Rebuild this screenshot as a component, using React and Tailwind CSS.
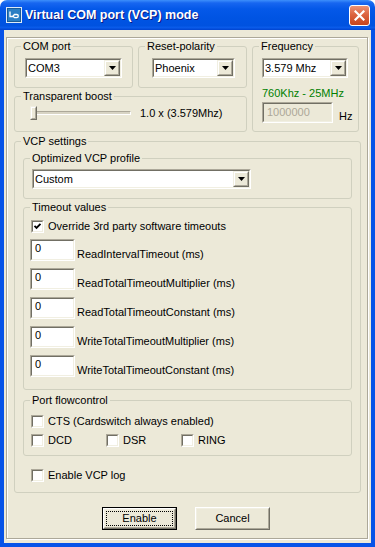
import React from "react";

// classic 3D edges on the XP dialog face colour
const sunkenOuter = "border border-t-[#ACA899] border-l-[#ACA899] border-b-white border-r-white";
const sunkenInner = "border border-t-[#716F64] border-l-[#716F64] border-b-[#F1EFE2] border-r-[#F1EFE2]";
const raisedOuter = "border border-t-[#F1EFE2] border-l-[#F1EFE2] border-b-[#716F64] border-r-[#716F64]";
const raisedInner = "border border-t-white border-l-white border-b-[#ACA899] border-r-[#ACA899]";

const AppIcon = () => (
  <svg width="16" height="16" viewBox="0 0 16 16">
    <rect x="0.5" y="0.5" width="15" height="15" fill="#2B7FC4" stroke="#DDEBF7" />
    <rect x="1.5" y="1.5" width="13" height="13" fill="none" stroke="#1A5C99" />
    <path
      d="M4 4.5v5h2.5l2-2h2.2a1.6 1.6 0 1 1 0 3.2h-2.2l-2-2"
      fill="none"
      stroke="#FFFFFF"
      strokeWidth="1.3"
    />
  </svg>
);

const CloseButton = () => (
  <div className="ml-auto flex h-[21px] w-[21px] items-center justify-center rounded-[3px] border border-white bg-[linear-gradient(180deg,#EC9274_0%,#DC6440_45%,#C8441B_100%)]">
    <svg width="11" height="11" viewBox="0 0 11 11">
      <path d="M1.5 1.5L9.5 9.5M9.5 1.5L1.5 9.5" stroke="#FFFFFF" strokeWidth="2.2" strokeLinecap="square" />
    </svg>
  </div>
);

const DropButton = () => (
  <div className={`h-full w-[16px] bg-[#ECE9D8] ${raisedOuter}`}>
    <div className={`flex h-full w-full items-center justify-center ${raisedInner}`}>
      <svg width="7" height="4" viewBox="0 0 7 4">
        <polygon points="0,0 7,0 3.5,4" fill="#000000" />
      </svg>
    </div>
  </div>
);

const Combo = ({ className, value }) => (
  <div className={`h-[20px] ${sunkenOuter} ${className}`}>
    <div className={`flex h-full bg-white ${sunkenInner}`}>
      <span className="flex-1 truncate pl-[1px] leading-[16px]">{value}</span>
      <DropButton />
    </div>
  </div>
);

const Check = ({ checked, label, className = "" }) => (
  <div className={`flex items-center gap-[4px] ${className}`}>
    <div className={`h-[13px] w-[13px] shrink-0 ${sunkenOuter}`}>
      <div className={`h-full w-full bg-white ${sunkenInner}`}>
        {checked && (
          <svg width="9" height="9" viewBox="0 0 9 9" className="block">
            <path d="M1.5 3.8L3.5 5.8L7.5 1.8" fill="none" stroke="#000000" strokeWidth="1.9" />
          </svg>
        )}
      </div>
    </div>
    <span className="leading-[13px]">{label}</span>
  </div>
);

const Group = ({ title, className = "", children }) => (
  <fieldset className={`rounded-[3px] border border-[#D0D0BF] ${className}`}>
    <legend className="ml-[6px] px-[2px] leading-[13px]">{title}</legend>
    {children}
  </fieldset>
);

const TimeoutRow = ({ label }) => (
  <div className="flex items-end gap-[2px]">
    <div className={`h-[22px] w-[45px] ${sunkenOuter}`}>
      <div className={`h-full w-full bg-white pl-[3px] pt-[1px] leading-[13px] ${sunkenInner}`}>0</div>
    </div>
    <span className="leading-[13px]">{label}</span>
  </div>
);

const Button = ({ label, isDefault }) =>
  isDefault ? (
    <div className="h-[23px] w-[75px] border border-black bg-[#ECE9D8]">
      <div className={`h-full w-full ${raisedInner.replace("border-b-[#ACA899] border-r-[#ACA899]", "border-b-[#716F64] border-r-[#716F64]")}`}>
        <div className="h-full w-full border border-t-[#F1EFE2] border-l-[#F1EFE2] border-b-[#ACA899] border-r-[#ACA899] p-[1px]">
          <div className="flex h-full w-full items-center justify-center border border-dotted border-black">{label}</div>
        </div>
      </div>
    </div>
  ) : (
    <div className="h-[23px] w-[75px] border border-t-white border-l-white border-b-[#716F64] border-r-[#716F64] bg-[#ECE9D8]">
      <div className="flex h-full w-full items-center justify-center border border-t-[#F1EFE2] border-l-[#F1EFE2] border-b-[#ACA899] border-r-[#ACA899]">
        {label}
      </div>
    </div>
  );

const timeouts = [
  "ReadIntervalTimeout (ms)",
  "ReadTotalTimeoutMultiplier (ms)",
  "ReadTotalTimeoutConstant (ms)",
  "WriteTotalTimeoutMultiplier (ms)",
  "WriteTotalTimeoutConstant (ms)",
];

export default function App() {
  return (
    <div className="flex h-[547px] w-[375px] flex-col text-[11px] text-black [font-family:'Liberation_Sans',Arial,sans-serif]">
      {/* Title bar */}
      <div className="flex h-[30px] shrink-0 items-center rounded-t-[7px] bg-[linear-gradient(180deg,#3D8FFB_0%,#1766F0_10%,#0458E8_30%,#0054E3_60%,#0052E0_85%,#0A5BEA_92%,#0043CF_100%)] pl-[6px] pr-[5px]">
        <AppIcon />
        <span className="ml-[3px] text-[12.5px] font-bold text-white [text-shadow:1px_1px_0_#0A1883]">
          Virtual COM port (VCP) mode
        </span>
        <CloseButton />
      </div>

      {/* Client area */}
      <div className="flex-1 border-x-4 border-b-4 border-[#0753E8] bg-[#ECE9D8]">
        <div className="ml-[2px] mt-[7px] h-[502px] w-[362px] border border-[#ACA899] pl-[7px] pt-[2px] shadow-[inset_1px_1px_0_#fff,1px_1px_0_#fff]">
          <div className="flex gap-[5px]">
            <div className="flex w-[233px] flex-col">
              <div className="flex gap-[5px]">
                <Group title="COM port" className="h-[48px] w-[119px]">
                  <div className="pl-[10px] pt-[5px]">
                    <Combo className="w-[97px]" value="COM3" />
                  </div>
                </Group>
                <Group title="Reset-polarity" className="h-[48px] w-[109px]">
                  <div className="pl-[13px] pt-[5px]">
                    <Combo className="w-[83px]" value="Phoenix" />
                  </div>
                </Group>
              </div>
              <Group title="Transparent boost" className="mt-[2px] h-[42px] w-[233px]">
                <div className="flex items-center pl-[15px] pt-[3px]">
                  <div className="relative h-[14px] w-[101px]">
                    <div className="absolute left-0 right-0 top-[5px] h-[4px] border border-t-[#ACA899] border-l-[#ACA899] border-b-white border-r-white bg-[#D8D4C4]" />
                    <div className={`absolute left-0 top-0 h-[14px] w-[7px] bg-[#ECE9D8] ${raisedOuter}`}>
                      <div className={`h-full w-full ${raisedInner}`} />
                    </div>
                  </div>
                  <span className="ml-[9px] leading-[13px]">1.0 x (3.579Mhz)</span>
                </div>
              </Group>
            </div>

            <Group title="Frequency" className="h-[92px] w-[107px]">
              <div className="pl-[9px] pt-[5px]">
                <Combo className="w-[86px]" value="3.579 Mhz" />
                <div className="mt-[9px] leading-[13px] text-[#008000]">760Khz - 25MHz</div>
                <div className="mt-[2px] flex items-end gap-[6px]">
                  <div className={`h-[21px] w-[71px] ${sunkenOuter}`}>
                    <div className={`flex h-full w-full items-center bg-[#ECE9D8] pl-[3px] text-[#ACA899] ${sunkenInner}`}>
                      1000000
                    </div>
                  </div>
                  <span className="leading-[13px]">Hz</span>
                </div>
              </div>
            </Group>
          </div>

          <Group title="VCP settings" className="mt-[3px] h-[358px] w-[347px]">
            <div className="px-[8px] pt-[4px]">
              <Group title="Optimized VCP profile" className="h-[47px]">
                <div className="pl-[8px] pt-[4px]">
                  <Combo className="w-[219px]" value="Custom" />
                </div>
              </Group>

              <Group title="Timeout values" className="mt-[2px] h-[189px]">
                <div className="pl-[6px] pt-[6px]">
                  <Check checked className="ml-[1px]" label="Override 3rd party software timeouts" />
                  <div className="mt-[6px] flex flex-col gap-[7px]">
                    {timeouts.map((t) => (
                      <TimeoutRow key={t} label={t} />
                    ))}
                  </div>
                </div>
              </Group>

              <Group title="Port flowcontrol" className="mt-[4px] h-[62px]">
                <div className="pl-[7px] pt-[8px]">
                  <Check label="CTS (Cardswitch always enabled)" />
                  <div className="mt-[6px] flex">
                    <Check className="w-[75px]" label="DCD" />
                    <Check className="w-[75px]" label="DSR" />
                    <Check label="RING" />
                  </div>
                </div>
              </Group>

              <Check className="ml-[8px] mt-[13px]" label="Enable VCP log" />
            </div>
          </Group>

          <div className="ml-[88px] mt-[14px] flex gap-[18px]">
            <Button isDefault label="Enable" />
            <Button label="Cancel" />
          </div>
        </div>
      </div>
    </div>
  );
}
